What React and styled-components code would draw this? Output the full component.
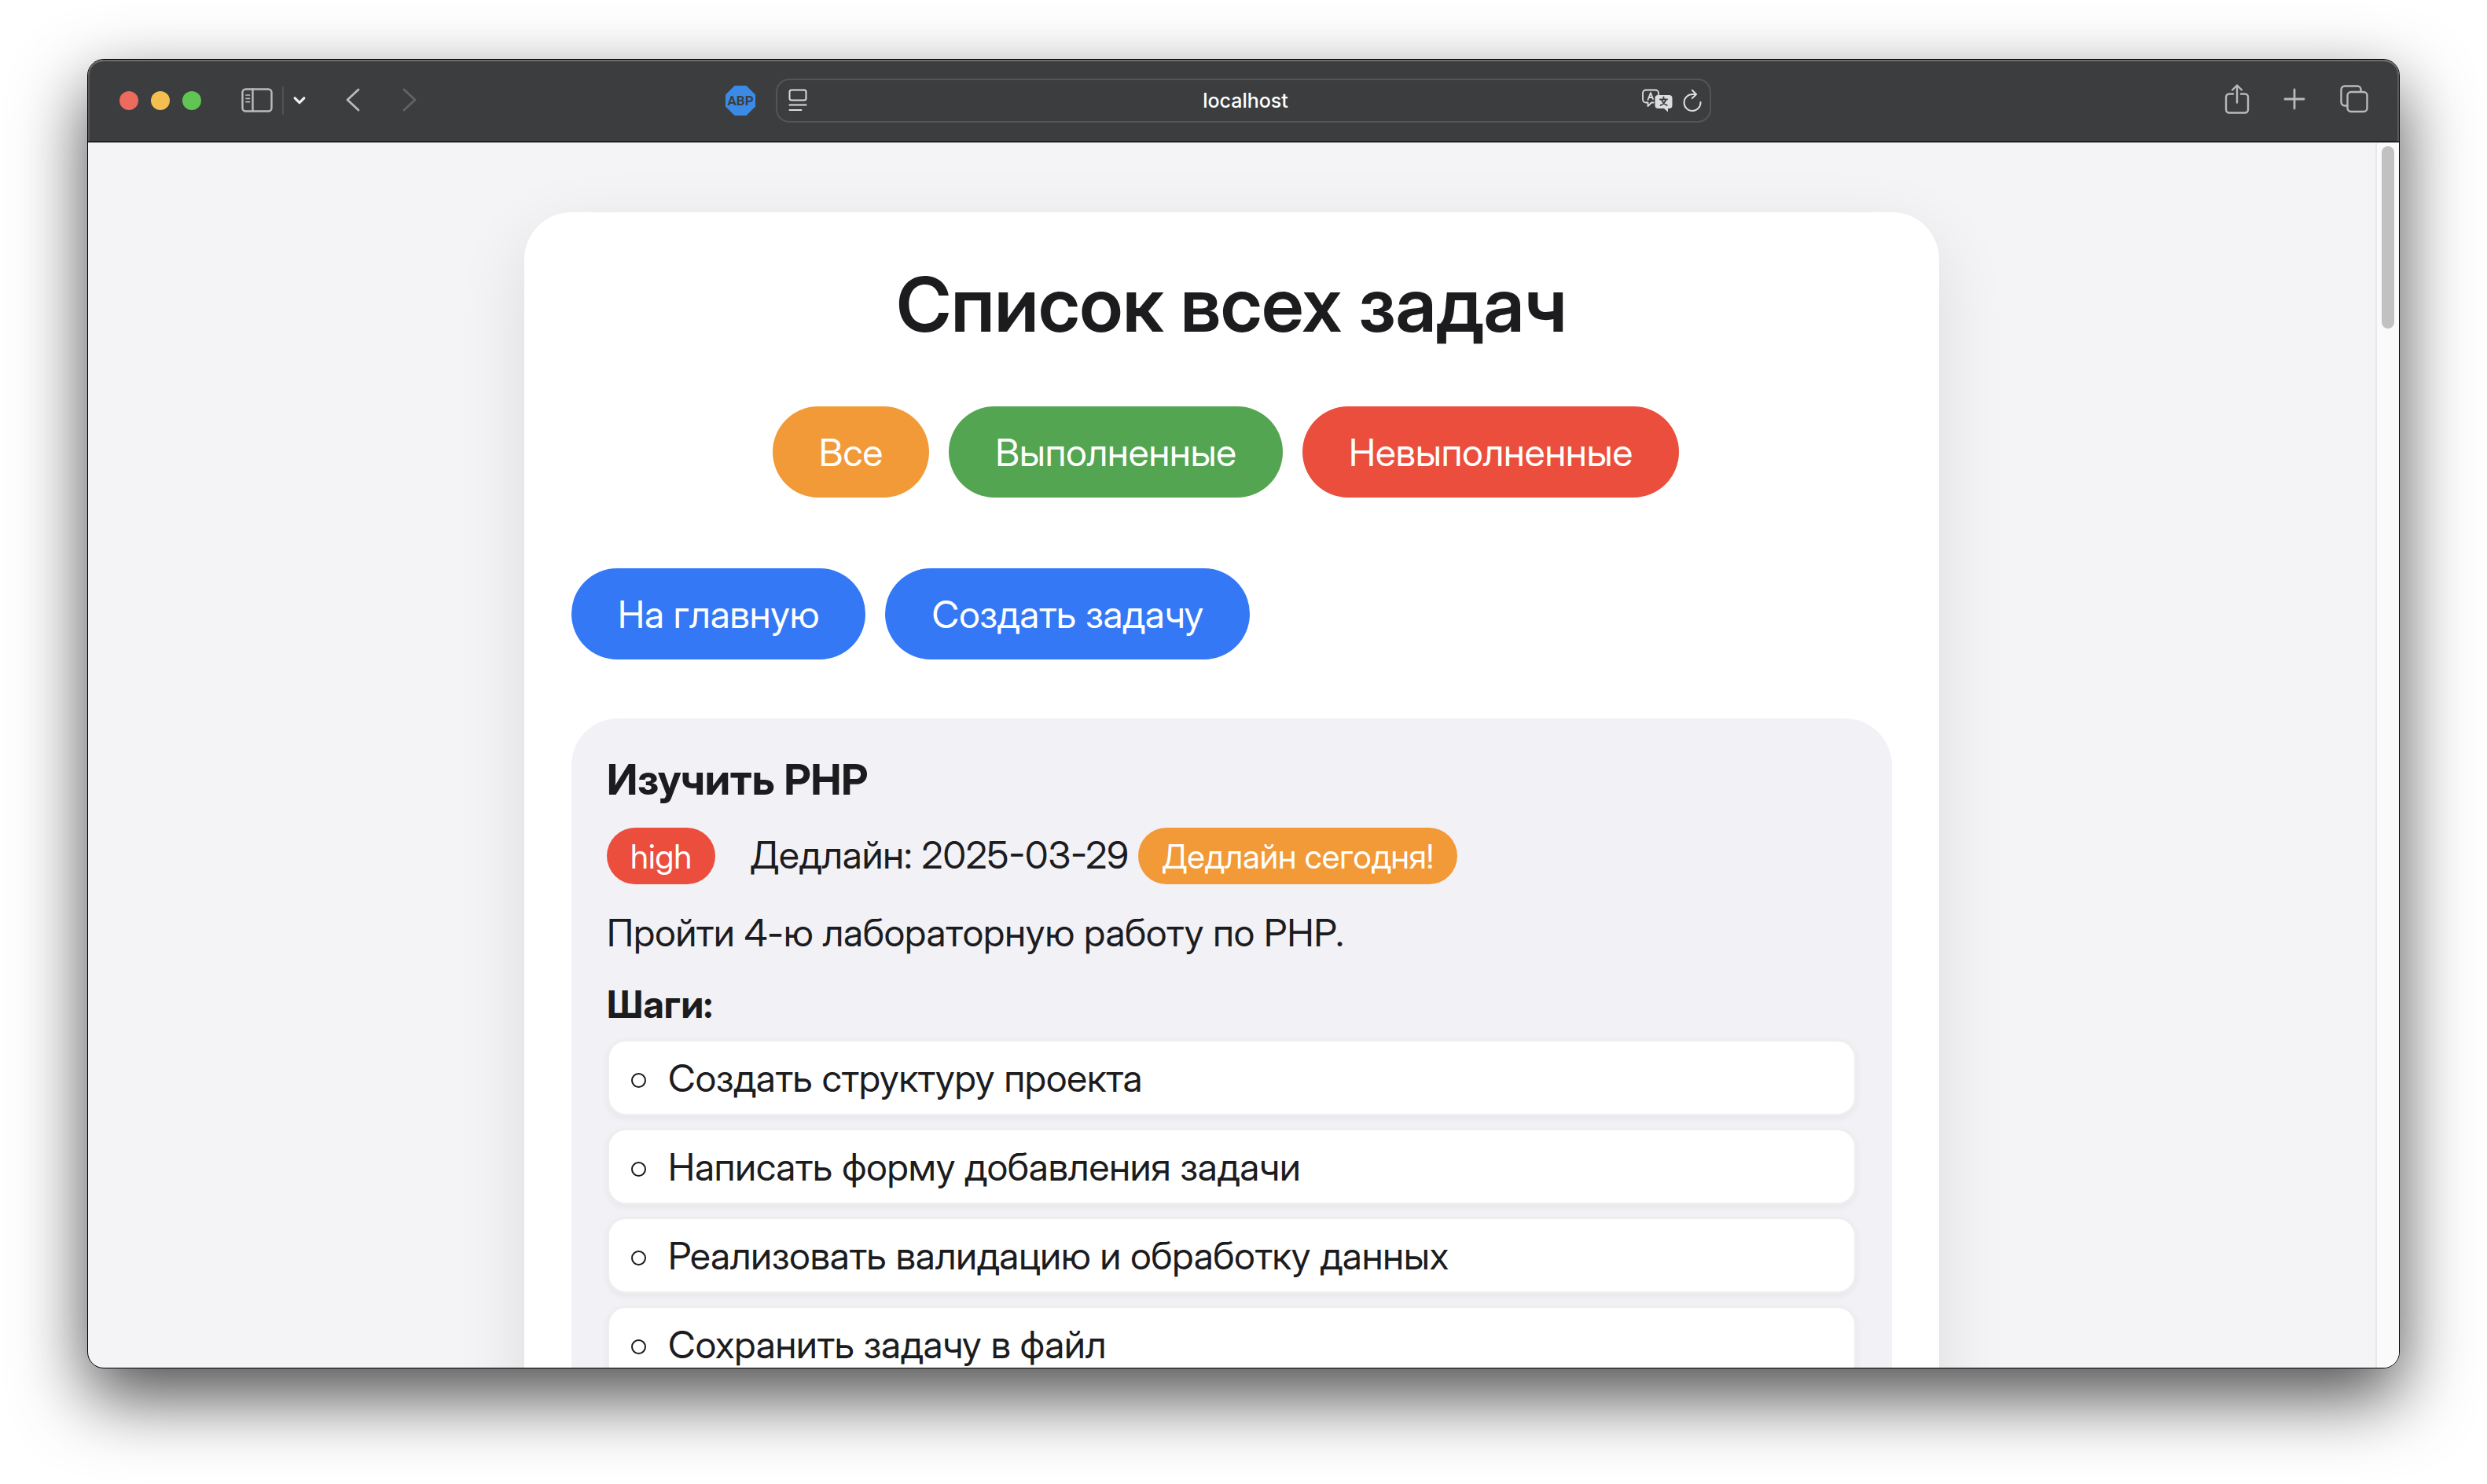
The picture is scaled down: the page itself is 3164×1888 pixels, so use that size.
import React from "react";
import styled, { createGlobalStyle } from "styled-components";

const GlobalStyle = createGlobalStyle`
  *, *::before, *::after { box-sizing: border-box; }
  body {
    margin: 0;
    background: #ffffff;
    color: #1c1c1e;
    font-family: "Inter Display", Inter, Roboto, "Liberation Sans", sans-serif;
    -webkit-font-smoothing: antialiased;
  }
`;

const Desktop = styled.div`
  display: flex;
  height: 100vh;
  padding: 75px 111px 147px;
`;

const Window = styled.div`
  flex: 1;
  min-width: 0;
  display: flex;
  flex-direction: column;
  overflow: hidden;
  border: 1px solid #000000;
  border-radius: 21px;
  background: #f4f4f6;
  box-shadow: 0 36px 90px rgba(0, 0, 0, 0.7);
`;

const Toolbar = styled.header`
  flex: none;
  display: grid;
  grid-template-columns: 1fr minmax(0, 1190px) 1fr;
  align-items: center;
  height: 105px;
  padding-bottom: 1px;
  border-bottom: 1px solid #000000;
  border-radius: 20px 20px 0 0;
  background: #3c3d3f;
  box-shadow: inset 0 2px 0 #6d6e6f, inset 2px 0 0 #59595b, inset -2px 0 0 #59595b;
`;

const LeftSide = styled.div`
  display: flex;
  align-items: center;
  padding: 0 26px 0 40px;
`;

const RightSide = styled.div`
  display: flex;
  align-items: center;
  justify-content: flex-end;
  gap: 43px;
  padding: 0 38px 3px 0;
`;

const TrafficLights = styled.div`
  display: flex;
  gap: 16px;
  margin-right: 51px;
`;

const Light = styled.button`
  width: 24px;
  height: 24px;
  padding: 0;
  border: 0;
  border-radius: 50%;
  background: ${(p) => p.$color};
`;

const IconButton = styled.button`
  display: flex;
  padding: 0;
  border: 0;
  background: none;
  color: ${(p) => p.$color || "#b9babb"};

  svg { display: block; }
`;

const SidebarGroup = styled.div`
  display: flex;
  align-items: center;
  gap: 12px;
`;

const Divider = styled.span`
  width: 2px;
  height: 36px;
  background: #515254;
`;

const History = styled.div`
  display: flex;
  gap: 52px;
  margin: 0 auto 0 50px;
`;

const AddressBar = styled.div`
  display: flex;
  align-items: center;
  gap: 12px;
  height: 56px;
  padding: 0 9px 0 14px;
  border: 2px solid #545557;
  border-radius: 17px;
`;

const AddressInput = styled.input`
  flex: 1;
  min-width: 0;
  padding: 0 0 0 54px;
  border: 0;
  outline: 0;
  background: none;
  color: #ffffff;
  font: 500 25px/32px Inter, Roboto, "Liberation Sans", sans-serif;
  text-align: center;
`;

const Viewport = styled.div`
  flex: 1;
  min-height: 0;
  display: flex;
  border-top: 1px solid #b5b5b6;
`;

const Page = styled.main`
  flex: 1;
  min-width: 0;
  padding: 88px 60px;
  overflow: auto;
  scrollbar-width: none;
`;

const ScrollTrack = styled.div`
  flex: none;
  width: 30px;
  padding: 4px 6px;
  border-left: 2px solid #e8e8e8;
  background: #fafafa;
`;

const ScrollThumb = styled.div`
  width: 16px;
  height: 232px;
  border-radius: 8px;
  background: #c1c1c1;
`;

const Container = styled.section`
  max-width: 1800px;
  margin: 0 auto;
  padding: 60px;
  border-radius: 60px;
  background: #ffffff;
  box-shadow: 0 30px 90px rgba(0, 0, 0, 0.1);
`;

const Heading = styled.h1`
  margin: 0 0 72px;
  font-size: 96px;
  font-weight: 600;
  line-height: 115px;
  text-align: center;
`;

const Actions = styled.nav`
  display: flex;
  gap: 25px;
  justify-content: ${(p) => (p.$center ? "center" : "flex-start")};
  padding-right: 15px;
  margin-bottom: ${(p) => (p.$center ? 90 : 75)}px;
`;

const ActionLink = styled.a`
  padding: 29px 59px 27px;
  border-radius: 60px;
  background: ${(p) => p.$color};
  color: #ffffff;
  font-size: 48px;
  line-height: 60px;
  text-decoration: none;
`;

const Task = styled.article`
  padding: 45px;
  border-radius: 60px;
  background: #f2f1f6;
`;

const TaskTitle = styled.h2`
  margin: 0 0 28px;
  font-size: 54px;
  font-weight: 700;
  line-height: 66px;
`;

const Meta = styled.div`
  display: flex;
  align-items: baseline;
  gap: 12px;
  margin-bottom: 33px;
  font-size: 48px;
  line-height: 58px;
`;

const Tag = styled.span`
  padding: 12px 30px 10px;
  border-radius: 36px;
  background: ${(p) => p.$color};
  color: #ffffff;
  font-size: 42px;
  line-height: 50px;
`;

const Deadline = styled.span`
  margin-left: 32px;
`;

const Description = styled.p`
  margin: 0 0 33px;
  font-size: 48px;
  line-height: 58px;
`;

const StepsTitle = styled.h3`
  margin: 0 0 15px;
  font-size: 48px;
  font-weight: 700;
  line-height: 58px;
`;

const Steps = styled.ul`
  display: grid;
  gap: 15px;
  margin: 0;
  padding: 0;
  list-style: none;
`;

const Step = styled.li`
  display: flex;
  align-items: center;
  gap: 28px;
  padding: 18px 28px 16px;
  border: 3px solid #eeeeee;
  border-radius: 24px;
  background: #ffffff;
  box-shadow: 0 3px 9px rgba(0, 0, 0, 0.05);
  font-size: 48px;
  line-height: 58px;

  &::before {
    content: "";
    width: 19px;
    height: 19px;
    margin-top: 4px;
    border: 2px solid #1c1c1e;
    border-radius: 50%;
  }
`;

const steps = [
  "Создать структуру проекта",
  "Написать форму добавления задачи",
  "Реализовать валидацию и обработку данных",
  "Сохранить задачу в файл",
];

const stroke = {
  fill: "none",
  stroke: "currentColor",
  strokeLinecap: "round",
  strokeLinejoin: "round",
};

const SidebarIcon = () => (
  <svg width="40" height="32" viewBox="0 0 40 32" {...stroke} strokeWidth="2.4">
    <rect x="1.5" y="1.5" width="37" height="28" rx="4" />
    <path d="M14.5 1.5v28" />
    <path d="M6 9h4.500M6 13.300h4.500M6 17.600h4.500" strokeWidth="1.700" />
  </svg>
);

const ChevronDown = () => (
  <svg width="16" height="12" viewBox="0 0 16 12" {...stroke} strokeWidth="3.200">
    <path d="M2.200 2.800 8 8.600l5.800-5.800" />
  </svg>
);

const ChevronSide = ({ flip }) => (
  <svg width="20" height="32" viewBox="0 0 20 32" {...stroke} strokeWidth="2.800">
    <path d={flip ? "M3 2l14 13L3 28" : "M17 2 3 15l14 13"} />
  </svg>
);

const AdblockIcon = () => (
  <svg width="38" height="38" viewBox="0 0 38 38">
    <path d="M11.500 0h15L38 11.500v15L26.500 38h-15L0 26.500v-15z" fill="#3b8ae6" />
    <text
      x="19"
      y="25"
      textAnchor="middle"
      fontFamily='Roboto, "Noto Sans", sans-serif'
      fontSize="17"
      fontWeight="700"
      fill="#3c3d3f"
    >
      ABP
    </text>
  </svg>
);

const ReaderIcon = () => (
  <svg width="24" height="30" viewBox="0 0 24 30" {...stroke} strokeWidth="2">
    <rect x="1.500" y="1.500" width="21" height="13" rx="2.500" />
    <path d="M1.500 20.500h21M1.500 27h15" />
  </svg>
);

const TranslateIcon = () => (
  <svg width="40" height="30" viewBox="0 0 40 30" {...stroke} strokeWidth="1.800">
    <path d="M15.500 17.500H13L8.500 22v-4.500H6a4 4 0 0 1-4-4v-8a4 4 0 0 1 4-4h12a4 4 0 0 1 4 4v2" />
    <path d="M8.500 14 12 5l3 8M9.700 11h4.600" />
    <path
      d="M21.500 8h14a4 4 0 0 1 4 4v9a4 4 0 0 1-4 4H34v4.500L29 25h-7.500a4 4 0 0 1-4-4v-9a4 4 0 0 1 4-4z"
      fill="currentColor"
      stroke="none"
    />
    <path d="M28.500 10.500v2M24 13.500h9M31.500 13.500c-1 3.500-3.500 6-7 7.500M25.800 13.500c1 3.500 3.500 6 7 7.500" stroke="#3c3d3f" />
  </svg>
);

const ReloadIcon = () => (
  <svg width="26" height="30" viewBox="0 0 26 30" {...stroke} strokeWidth="2">
    <path d="M23.500 17A10.500 10.500 0 1 1 13 7h4.500" />
    <path d="M12.800 1.800 18 7l-5.200 5" />
  </svg>
);

const ShareIcon = () => (
  <svg width="32" height="40" viewBox="0 0 32 40" {...stroke} strokeWidth="2.400">
    <path d="M11 13.500H6A4 4 0 0 0 2 17.500v16a4 4 0 0 0 4 4h20a4 4 0 0 0 4-4v-16a4 4 0 0 0-4-4h-5" />
    <path d="M16 24.500V3M10 8.500l6-6 6 6" />
  </svg>
);

const PlusIcon = () => (
  <svg width="28" height="28" viewBox="0 0 28 28" {...stroke} strokeWidth="2.800">
    <path d="M14 2v24M2 14h24" />
  </svg>
);

const TabsIcon = () => (
  <svg width="38" height="38" viewBox="0 0 38 38" {...stroke} strokeWidth="2.400">
    <rect x="10.500" y="10" width="25" height="25" rx="4.500" />
    <path d="M10 27.500H7A4.500 4.500 0 0 1 2.500 23V7A4.500 4.500 0 0 1 7 2.500h16A4.500 4.500 0 0 1 27.500 7v2.500" />
  </svg>
);

export default function App() {
  return (
    <>
      <GlobalStyle />
      <Desktop>
        <Window>
          <Toolbar>
            <LeftSide>
              <TrafficLights>
                <Light $color="#ec6a5e" aria-label="Закрыть" />
                <Light $color="#f5bf4f" aria-label="Свернуть" />
                <Light $color="#61c554" aria-label="Развернуть" />
              </TrafficLights>
              <SidebarGroup>
                <IconButton aria-label="Боковое меню"><SidebarIcon /></IconButton>
                <Divider />
                <IconButton $color="#efefef" aria-label="Группы вкладок"><ChevronDown /></IconButton>
              </SidebarGroup>
              <History>
                <IconButton aria-label="Назад"><ChevronSide /></IconButton>
                <IconButton $color="#626365" aria-label="Вперёд"><ChevronSide flip /></IconButton>
              </History>
              <IconButton aria-label="Блокировщик рекламы"><AdblockIcon /></IconButton>
            </LeftSide>
            <AddressBar>
              <IconButton $color="#dddddd" aria-label="Режим чтения"><ReaderIcon /></IconButton>
              <AddressInput aria-label="Адрес" defaultValue="localhost" />
              <IconButton $color="#dddddd" aria-label="Перевести"><TranslateIcon /></IconButton>
              <IconButton $color="#dddddd" aria-label="Обновить"><ReloadIcon /></IconButton>
            </AddressBar>
            <RightSide>
              <IconButton aria-label="Поделиться"><ShareIcon /></IconButton>
              <IconButton aria-label="Новая вкладка"><PlusIcon /></IconButton>
              <IconButton aria-label="Все вкладки"><TabsIcon /></IconButton>
            </RightSide>
          </Toolbar>
          <Viewport>
            <Page>
              <Container>
                <Heading>Список всех задач</Heading>
                <Actions $center>
                  <ActionLink href="#all" $color="#f19a37">Все</ActionLink>
                  <ActionLink href="#done" $color="#53a551">Выполненные</ActionLink>
                  <ActionLink href="#undone" $color="#eb4e3d">Невыполненные</ActionLink>
                </Actions>
                <Actions>
                  <ActionLink href="#home" $color="#3478f6">На главную</ActionLink>
                  <ActionLink href="#create" $color="#3478f6">Создать задачу</ActionLink>
                </Actions>
                <Task>
                  <TaskTitle>Изучить PHP</TaskTitle>
                  <Meta>
                    <Tag $color="#eb4e3d">high</Tag>
                    <Deadline>Дедлайн: 2025-03-29</Deadline>
                    <Tag $color="#f19a37">Дедлайн сегодня!</Tag>
                  </Meta>
                  <Description>Пройти 4-ю лабораторную работу по PHP.</Description>
                  <StepsTitle>Шаги:</StepsTitle>
                  <Steps>
                    {steps.map((step) => (
                      <Step key={step}>{step}</Step>
                    ))}
                  </Steps>
                </Task>
              </Container>
            </Page>
            <ScrollTrack>
              <ScrollThumb />
            </ScrollTrack>
          </Viewport>
        </Window>
      </Desktop>
    </>
  );
}
